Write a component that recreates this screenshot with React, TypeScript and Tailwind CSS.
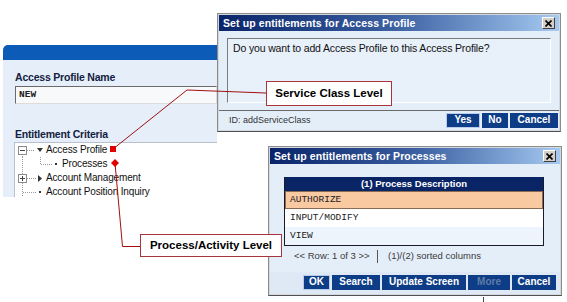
import React from 'react';

const sans = "font-['Liberation_Sans',Arial,sans-serif]";
const mono = "font-['Liberation_Mono','Courier_New',monospace]";

function TitleBar({ title }: { title: string }) {
  return (
    <div className="flex h-[16px] shrink-0 items-center justify-between bg-linear-to-r from-[#0a246a] via-[#3a5ea0] to-[#a6caf0] pl-[4px] pr-[4px]">
      <span className={`${sans} text-[10.5px] font-bold leading-[12px] tracking-[0.1px] text-white`}>{title}</span>
      <span className="flex h-[12px] w-[13px] items-center justify-center border border-t-white border-l-white border-r-[#404040] border-b-[#404040] bg-[#d4d0c8]">
        <svg width="7" height="7" viewBox="0 0 7 7">
          <path d="M0.5 0.5 L6.5 6.5 M6.5 0.5 L0.5 6.5" stroke="#000" strokeWidth="1.6" />
        </svg>
      </span>
    </div>
  );
}

function Btn({ label, w, active, muted }: { label: string; w: string; active?: boolean; muted?: boolean }) {
  return (
    <div
      className={`${sans} ${w} flex h-[15px] items-center justify-center bg-[#0d3d86] text-[10px] font-bold leading-none ${
        muted ? 'text-[#5f7bab]' : 'text-white'
      } ${active ? 'border border-[#b9cbe6]' : ''}`}
    >
      {label}
    </div>
  );
}

function TreeRow({ children, svg, w }: { children: React.ReactNode; svg: React.ReactNode; w: number }) {
  return (
    <div className="flex h-[14px] shrink-0 items-center">
      <svg width={w} height="14" className="shrink-0">
        {svg}
      </svg>
      <span className={`${sans} text-[10px] leading-none tracking-[-0.15px] text-[#111]`}>{children}</span>
    </div>
  );
}

const dot = { stroke: '#9a9a9a', strokeWidth: 1, strokeDasharray: '1 1' };

function Tree() {
  return (
    <div className="flex flex-col">
      <TreeRow
        w={31}
        svg={
          <>
            <line x1="7.5" y1="11" x2="7.5" y2="14" {...dot} />
            <line x1="12" y1="7.5" x2="20" y2="7.5" {...dot} />
            <rect x="3.5" y="3.5" width="8" height="8" fill="#fff" stroke="#8a8a8a" />
            <line x1="5" y1="7.5" x2="10" y2="7.5" stroke="#444" />
            <path d="M22 5 L28 5 L25 9 Z" fill="#333" />
          </>
        }
      >
        Access Profile
      </TreeRow>
      <TreeRow
        w={47}
        svg={
          <>
            <line x1="7.5" y1="0" x2="7.5" y2="14" {...dot} />
            <line x1="25.5" y1="0" x2="25.5" y2="7.5" {...dot} />
            <line x1="26" y1="7.5" x2="37" y2="7.5" {...dot} />
            <rect x="40" y="6" width="2" height="2" fill="#333" />
          </>
        }
      >
        Processes
      </TreeRow>
      <TreeRow
        w={31}
        svg={
          <>
            <line x1="7.5" y1="0" x2="7.5" y2="14" {...dot} />
            <line x1="12" y1="7.5" x2="21" y2="7.5" {...dot} />
            <rect x="3.5" y="3.5" width="8" height="8" fill="#fff" stroke="#8a8a8a" />
            <line x1="5" y1="7.5" x2="10" y2="7.5" stroke="#444" />
            <line x1="7.5" y1="5" x2="7.5" y2="10" stroke="#444" />
            <path d="M23 4 L27 7.5 L23 11 Z" fill="#333" />
          </>
        }
      >
        Account Management
      </TreeRow>
      <TreeRow
        w={31}
        svg={
          <>
            <line x1="7.5" y1="0" x2="7.5" y2="14" {...dot} />
            <line x1="8" y1="7.5" x2="21" y2="7.5" {...dot} />
            <rect x="24" y="6" width="2" height="2" fill="#333" />
          </>
        }
      >
        Account Position Inquiry
      </TreeRow>
      <svg width="31" height="14" className="shrink-0">
        <line x1="7.5" y1="0" x2="7.5" y2="14" {...dot} />
      </svg>
    </div>
  );
}

export default function App() {
  return (
    <div className="relative h-[302px] w-[567px] overflow-hidden bg-white">
      {/* background page */}
      <div className="absolute left-[3px] top-[45px] flex h-[152px] w-[214px] flex-col overflow-hidden rounded-tl-[5px] bg-[#e6eff9]">
        <div className="h-[15px] w-full shrink-0 bg-[#0c5bb6]" />
        <div className="flex shrink-0 flex-col pl-[11px]">
          <div className={`${sans} ml-[1px] mt-[11px] text-[10.5px] font-bold leading-[12px] tracking-[-0.2px] text-[#13213f]`}>
            Access Profile Name
          </div>
          <div className="ml-[1px] mt-[3px] flex h-[18px] shrink-0 items-center border border-t-[#6a6a6a] border-l-[#6a6a6a] border-r-[#dcdcdc] border-b-[#dcdcdc] bg-[#f7f9fb] pl-[3px]">
            <span className={`${mono} text-[9.5px] font-bold leading-none text-[#222]`}>NEW</span>
          </div>
          <div className={`${sans} ml-[1px] mt-[24px] text-[10.5px] font-bold leading-[12px] tracking-[-0.2px] text-[#13213f]`}>
            Entitlement Criteria
          </div>
          <div className="mt-[2px] h-[80px] shrink-0 border-l border-t border-[#b8c0cc] bg-white">
            <Tree />
          </div>
        </div>
      </div>

      {/* dialog 1 */}
      <div className="absolute left-[217px] top-[13px] flex h-[119px] w-[344px] flex-col border border-[#8c8c8c] border-b-[#505050] bg-[#d4d8de] p-[1px]">
        <TitleBar title="Set up entitlements for Access Profile" />
        <div className="flex flex-1 flex-col bg-[#e4eef9]">
          <div className="mx-[8px] mt-[7px] h-[65px] shrink-0 border border-t-[#7a7a7a] border-l-[#7a7a7a] border-r-white border-b-white bg-[#e8f0fa] pl-[5px] pt-[3px]">
            <p className={`${sans} text-[10.5px] leading-[12px] tracking-[-0.15px] text-[#111]`}>
              Do you want to add Access Profile to this Access Profile?
            </p>
          </div>
          <div className="mt-[7px] flex h-[19px] shrink-0 items-center justify-between border-t border-[#6a6a6a] pl-[10px] pr-[1px]">
            <span className={`${sans} text-[9px] leading-none text-[#333]`}>ID: addServiceClass</span>
            <div className="flex gap-[2px]">
              <Btn label="Yes" w="w-[34px]" active />
              <Btn label="No" w="w-[26px]" />
              <Btn label="Cancel" w="w-[48px]" />
            </div>
          </div>
        </div>
      </div>

      {/* dialog 2 */}
      <div className="absolute left-[268px] top-[146px] flex h-[150px] w-[294px] flex-col border border-[#8c8c8c] border-b-[#505050] bg-[#d4d8de] p-[1px]">
        <TitleBar title="Set up entitlements for Processes" />
        <div className="flex flex-1 flex-col bg-[#e4eef9] pl-[14px] pr-[16px]">
          <div className="mt-[13px] flex shrink-0 flex-col border border-t-0 border-[#1a1a2a]">
            <div className={`${sans} flex h-[14px] items-center justify-center bg-[#0a2566] text-[9.5px] font-bold leading-none text-white`}>
              (1) Process Description
            </div>
            <div className={`${mono} flex h-[18px] items-center border border-[#8a6a50] bg-[#f9c9a2] pl-[4px] text-[9.5px] leading-none text-[#222]`}>
              AUTHORIZE
            </div>
            <div className={`${mono} flex h-[18px] items-center bg-white pl-[5px] text-[9.5px] leading-none text-[#222]`}>
              INPUT/MODIFY
            </div>
            <div className={`${mono} flex h-[18px] items-center bg-[#eef4fb] pl-[5px] text-[9.5px] leading-none text-[#222]`}>
              VIEW
            </div>
          </div>
          <div className={`${sans} mt-[3px] flex h-[14px] shrink-0 items-center text-[9.5px] leading-none text-[#3a3a3a]`}>
            <span className="ml-[10px] w-[83px]">&lt;&lt; Row: 1 of 3 &gt;&gt;</span>
            <span className="h-[13px] w-px bg-[#555]" />
            <span className="ml-[10px]">(1)/(2) sorted columns</span>
          </div>
        </div>
        <div className="flex h-[22px] shrink-0 items-center justify-end bg-[#dfe9f5] pb-[2px] pr-[4px]">
          <div className="flex gap-[2px]">
            <Btn label="OK" w="w-[27px]" active />
            <Btn label="Search" w="w-[48px]" />
            <Btn label="Update Screen" w="w-[84px]" />
            <Btn label="More" w="w-[42px]" muted />
            <Btn label="Cancel" w="w-[44px]" />
          </div>
        </div>
      </div>
      <div className="absolute left-[483px] top-[297px] h-[5px] w-px bg-[#444]" />

      {/* callout lines */}
      <svg className="pointer-events-none absolute left-0 top-0" width="567" height="302">
        <polyline points="266,93 187,90 113,149" fill="none" stroke="#a01010" strokeWidth="1" />
        <polyline points="115,163 122.5,246.5 140,246.5" fill="none" stroke="#a01010" strokeWidth="1" />
        <rect x="110" y="146" width="6" height="6" fill="#e00000" />
        <path d="M115 159 L119 163 L115 167 L111 163 Z" fill="#e00000" />
      </svg>

      {/* callout labels */}
      <div className={`${sans} absolute left-[266px] top-[81px] flex h-[25px] w-[126px] items-center justify-center border border-[#a8343c] bg-white text-[11.5px] font-bold text-black`}>
        Service Class Level
      </div>
      <div className={`${sans} absolute left-[140px] top-[234px] flex h-[23px] w-[142px] items-center justify-center border border-[#a8343c] bg-white text-[11.5px] font-bold text-black`}>
        Process/Activity Level
      </div>
    </div>
  );
}
